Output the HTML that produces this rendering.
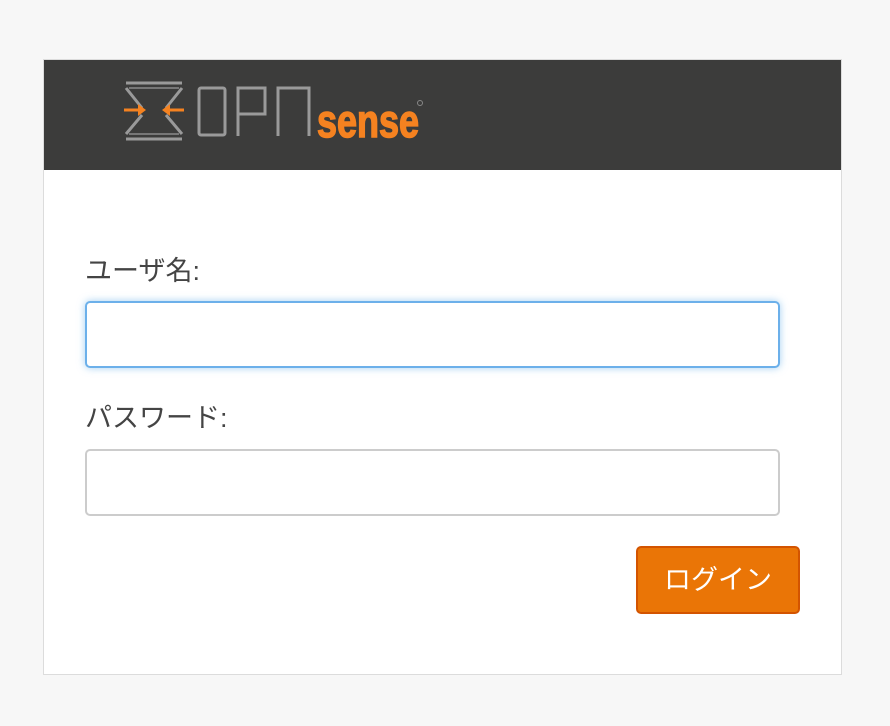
<!DOCTYPE html>
<html><head><meta charset="utf-8"><style>
html,body{margin:0;padding:0;background:#f7f7f7;width:890px;height:726px;overflow:hidden;font-family:"Liberation Sans","Noto Sans CJK JP",sans-serif;}
.card{position:absolute;left:43px;top:59px;width:797px;height:614px;background:#fff;border:1px solid #dcdcdc;}
.hdr{position:absolute;left:0;top:0;width:797px;height:110px;background:#3c3c3b;}
.lbl{position:absolute;left:41px;font-size:27px;color:#444;line-height:30px;}
.inp{position:absolute;left:41px;width:691px;height:63px;border:2px solid #ccc;border-radius:5px;background:#fff;}
.focus{border-color:#6cb0ea;box-shadow:0 0 8px rgba(102,175,233,.6);}
.btn{position:absolute;left:592px;top:486px;width:160px;height:64px;background:#ea7506;border:2px solid #d35400;border-radius:5px;color:#fff;font-size:27px;text-align:center;line-height:64px;}
</style></head><body>
<div class="card">
 <div class="hdr">
  <svg width="797" height="110" style="position:absolute;left:0;top:0">
   <g fill="none" stroke="#9a9a9a" stroke-width="3">
    <path d="M82 23 H138 M82 79 H138"/>
    <path d="M82 28 L98 48 M138 28 L122 48 M82 74 L98 55 M138 74 L122 55"/>
    <path d="M85 28 H135 M85 74 H135" stroke="#777" stroke-width="2"/>
   </g>
   <g stroke="#f58220" stroke-width="3" fill="#f58220">
    <path d="M80 50 H100 M140 50 H120" fill="none"/>
    <path d="M102 50 L94 44 L94 56Z M118 50 L126 44 L126 56Z" stroke="none"/>
   </g>
   <g fill="none" stroke="#9a9a9a" stroke-width="3">
    <rect x="155" y="28" width="26" height="47" rx="2"/>
    <path d="M194 76 V28 H221 V54 H194"/>
    <path d="M234 76 V28 H265 V76"/>
   </g>
   <text x="273" y="77" font-family="Liberation Sans Narrow, Liberation Sans, sans-serif" font-weight="900" font-size="46" fill="#f58220" stroke="#f58220" stroke-width="1.5" textLength="102" lengthAdjust="spacingAndGlyphs">sense</text>
   <circle cx="376" cy="43" r="2.5" fill="none" stroke="#888" stroke-width="1"/>
  </svg>
 </div>
 <div class="lbl" style="top:196px">ユーザ名:</div>
 <div class="inp focus" style="top:241px"></div>
 <div class="lbl" style="top:343px">パスワード:</div>
 <div class="inp" style="top:389px"></div>
 <div class="btn">ログイン</div>
</div>
</body></html>
